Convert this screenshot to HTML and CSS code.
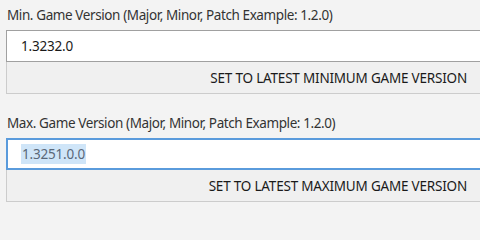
FILE: index.html
```html
<!DOCTYPE html>
<html>
<head>
<meta charset="utf-8">
<link rel="stylesheet" href="styles.css">
</head>
<body>
<div class="page">
  <section class="field">
    <div class="label">Min. Game Version (Major, Minor, Patch Example: 1.2.0)</div>
    <div class="textbox"><span class="value">1.3232.0</span></div>
    <div class="button">SET TO LATEST MINIMUM GAME VERSION</div>
  </section>
  <section class="field">
    <div class="label">Max. Game Version (Major, Minor, Patch Example: 1.2.0)</div>
    <div class="textbox focused"><span class="value selected">1.3251.0.0</span></div>
    <div class="button">SET TO LATEST MAXIMUM GAME VERSION</div>
  </section>
</div>
</body>
</html>
```
FILE: styles.css
```css
html, body {
  margin: 0;
  padding: 0;
  background: #f3f3f3;
}
body {
  width: 480px;
  height: 211px;
  overflow: hidden;
  font-family: "Noto Sans", "Open Sans", sans-serif;
  color: #222;
}
.page {
  padding: 0 0 0 6px;
  display: flex;
  flex-direction: column;
  gap: 14px;
}
.field {
  display: flex;
  flex-direction: column;
}
.label {
  height: 30px;
  font-size: 13.5px;
  letter-spacing: -0.4px;
  line-height: 30px;
  color: #333;
  padding-left: 1px;
}
.textbox {
  box-sizing: border-box;
  height: 32px;
  background: #fff;
  border: 1px solid #a0a0a0;
  border-right: none;
  display: flex;
  align-items: center;
  padding-left: 14px;
  font-size: 13.5px;
  letter-spacing: -0.2px;
  color: #1a1a1a;
}
.textbox.focused {
  border: 2px solid #5a9bdc;
  border-right: none;
  padding-left: 13px;
}
.value.selected {
  background: #cfe5f8;
  color: #5a6878;
  padding: 1px 1px;
}
.button {
  box-sizing: border-box;
  height: 32px;
  background: #f0f0f0;
  border: 1px solid #cccccc;
  border-top: none;
  border-right: none;
  display: flex;
  align-items: center;
  justify-content: flex-end;
  padding-right: 13px;
  font-size: 13.5px;
  letter-spacing: -0.2px;
  color: #1a1a1a;
}
```
